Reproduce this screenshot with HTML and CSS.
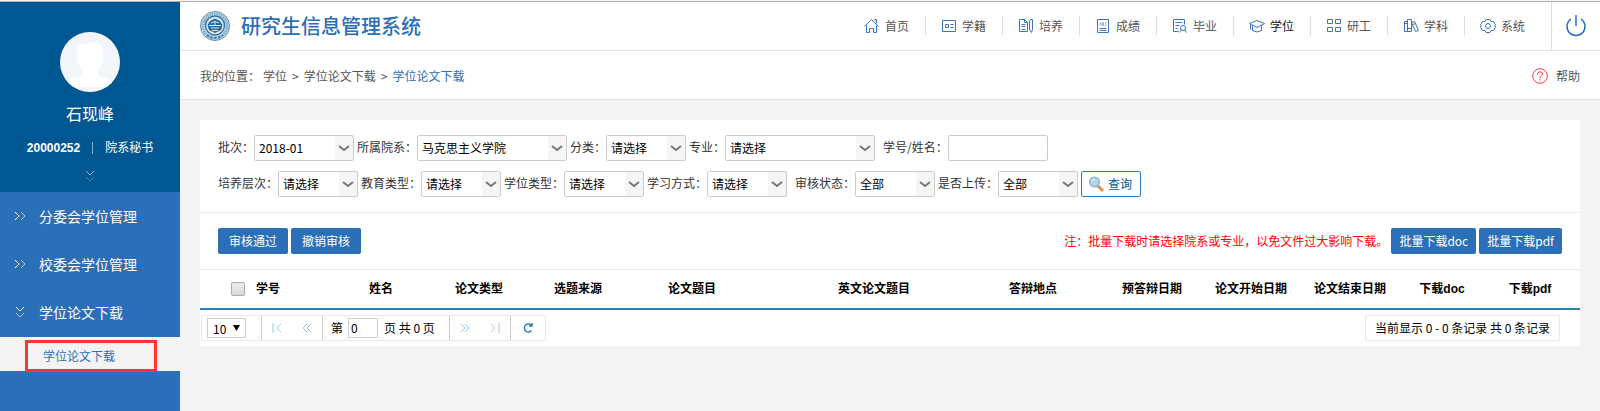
FILE: index.html
```html
<!DOCTYPE html>
<html lang="zh-CN">

<head>
<meta charset="utf-8">
<meta name="viewport" content="width=device-width, initial-scale=1">

<title>研究生信息管理系统</title>

<link rel="stylesheet" href="styles.css">
</head>

<body>

	<aside class="sidebar">
		<div class="profile">
			<svg class="avatar" viewBox="0 0 60 60">
				<defs><clipPath id="round"><circle cx="30" cy="30" r="30"/></clipPath></defs>
				<g clip-path="url(#round)">
					<rect width="60" height="60" fill="#f2f6fa"/>
					<path fill="#fff" d="M17 16c0-3 3-4 7-4 6-3 19-2 19 6v9c1 1 0 3-1 4-1 4-4 6-5 8 0 5 3 6 9 7 5 1 8 4 8 9H6c0-5 3-8 8-9 6-1 9-2 9-7-1-2-4-4-5-8-1-1-2-3-1-4z"/>
				</g>
			</svg>
			<div class="username">石现峰</div>
			<div class="role"><b>20000252</b><i></i><span>院系秘书</span></div>
			<svg class="more" width="12" height="12" viewBox="0 0 12 12"><path d="M2 1l4 4 4-4"/><path opacity=".5" d="M2 7l4 4 4-4"/></svg>
		</div>
		<nav class="menu">
			<a href="#"><svg width="12" height="12" viewBox="0 0 12 12"><path d="M1 2l4 4-4 4"/><path opacity=".6" d="M7 2l4 4-4 4"/></svg>分委会学位管理</a>
			<a href="#"><svg width="12" height="12" viewBox="0 0 12 12"><path d="M1 2l4 4-4 4"/><path opacity=".6" d="M7 2l4 4-4 4"/></svg>校委会学位管理</a>
			<a href="#"><svg width="12" height="12" viewBox="0 0 12 12"><path d="M2 1l4 4 4-4"/><path opacity=".6" d="M2 7l4 4 4-4"/></svg>学位论文下载</a>
			<div class="submenu"><a href="#">学位论文下载</a></div>
		</nav>
	</aside>

	<div class="main">
		<header class="header">
			<svg class="logo" viewBox="0 0 30 30">
				<circle cx="15" cy="15" r="14.5" fill="#c9dbe8" stroke="#5a8fb5"/>
				<circle cx="15" cy="15" r="12" fill="none" stroke="#7ba6c4" stroke-width="2.600" stroke-dasharray="1.400 1"/>
				<circle cx="15" cy="14.500" r="9.500" fill="#dfeaf2" stroke="#2f75a6" stroke-width="1.400"/>
				<path fill="#206a9e" d="M15 7.500l5 2.500 2.500 4-1.500 5-6 3-6-3-1.500-5 2.500-4z"/>
				<path fill="none" stroke="#dfeaf2" d="M9 14.500h12M11 12q4-3 8 0M11 17h8M12 19.500h6M15 10v4"/>
				<path fill="none" stroke="#3b78a5" stroke-width="2" stroke-dasharray="2 2" d="M7 24q8 6 16 0"/>
			</svg>
			<h1>研究生信息管理系统</h1>
			<nav class="topnav">
				<a href="#"><svg viewBox="-.5 -.5 16 16"><path d="M0 8l7-7 7 7M2 7v7h3v-4h4v4h3V7M10 1h2v4"/></svg>首页</a>
				<a href="#"><svg viewBox="-.5 -.5 16 16"><path d="M1 2h13v11H1zM4 6h3v3H4zM9 6h3M9 9h3"/></svg>学籍</a>
				<a href="#"><svg viewBox="-.5 -.5 16 16"><path d="M1 1h5l3 3v9H1zM6 1v3h3M3 6h4M3 8h4M3 11h4M11 3l1-2 2 0v10l-1 3-2-3z"/></svg>培养</a>
				<a href="#"><svg viewBox="-.5 -.5 16 16"><path d="M2 1h11v13H2zM4 10h7M4 12h7"/><path class="thin" d="M4 7l1-3 1 3M7 4v3h1V4zM11 4h-1v3h1"/></svg>成绩</a>
				<a href="#"><svg viewBox="-.5 -.5 16 16"><path d="M6 13H1V1h11v5M3 4h7M3 7h4M3 10h2M9 11l-2 3M12 11l2 3"/><circle cx="10.500" cy="9.500" r="2.500"/></svg>毕业</a>
				<a href="#" class="current"><svg viewBox="-.5 -.5 16 16"><path d="M0 5l7.500-3 7.500 3-7.500 4zM3 7v5q4.500 3 9 0V7M1 6v5"/></svg>学位</a>
				<a href="#"><svg viewBox="-.5 -.5 16 16"><path d="M1 1h5v4H1zM9 1h5v4H9zM1 9h5v4H1zM9 9h5v4H9z"/></svg>研工</a>
				<a href="#"><svg viewBox="-.5 -.5 16 16"><path d="M1 3h3v10H1zM4 1h4v12H4zM8 4l3-1 4 9-3 1zM1 5h3M4 10h4M9 6l3-1"/></svg>学科</a>
				<a href="#"><svg viewBox="-.5 -.5 16 16"><path d="M5.500 1h4l1 2 2.500 0 2 3.500-1 1 1 1-2 3.500-2.500 0-1 2h-4l-1-2-2.500 0-2-3.500 1-1-1-1L2 3l2.500 0z"/><circle cx="7.500" cy="7.500" r="2.500"/></svg>系统</a>
			</nav>
			<button class="power" type="button" aria-label="退出">
				<svg viewBox="0 0 22 22"><path d="M6 4a9 9 0 1 0 10 0M11 0v11"/></svg>
			</button>
		</header>

		<div class="crumbs">
			<span class="here">我的位置：</span>
			<a href="#">学位</a><span>&gt;</span>
			<a href="#">学位论文下载</a><span>&gt;</span>
			<a href="#" class="on">学位论文下载</a>
			<a href="#" class="help"><svg viewBox="0 0 16 16"><circle cx="8" cy="8" r="7.300"/><path d="M5.500 6.500q0-2.700 2.500-2.700t2.500 2.200q0 1.200-1.400 1.900Q8 8.500 8 10M8 11.200v1.300"/></svg>帮助</a>
		</div>

		<div class="card">
			<form class="filters">
				<div class="row">
					<label for="batch">批次：</label>
					<select id="batch" class="mid"><option>2018-01</option></select>
					<label for="dept">所属院系：</label>
					<select id="dept" class="wide"><option>马克思主义学院</option></select>
					<label for="kind">分类：</label>
					<select id="kind"><option>请选择</option></select>
					<label for="major">专业：</label>
					<select id="major" class="wide"><option>请选择</option></select>
					<label for="stu" class="apart">学号/姓名：</label>
					<input id="stu" type="text">
				</div>
				<div class="row">
					<label for="level">培养层次：</label>
					<select id="level"><option>请选择</option></select>
					<label for="edu">教育类型：</label>
					<select id="edu"><option>请选择</option></select>
					<label for="degree">学位类型：</label>
					<select id="degree"><option>请选择</option></select>
					<label for="mode">学习方式：</label>
					<select id="mode"><option>请选择</option></select>
					<label for="audit" class="apart">审核状态：</label>
					<select id="audit"><option>全部</option></select>
					<label for="upload">是否上传：</label>
					<select id="upload"><option>全部</option></select>
					<button class="search" type="button">
						<svg viewBox="0 0 16 16"><path d="M10 10l4 4" stroke="#e0913a" stroke-width="3" stroke-linecap="round"/><circle cx="6.500" cy="6" r="4.800" fill="#a8d6f8" stroke="#9aafc6" stroke-width="1.400"/><path d="M4 5q1-2 3-2" stroke="#fff" fill="none"/></svg>查询
					</button>
				</div>
			</form>

			<div class="toolbar">
				<button type="button">审核通过</button>
				<button type="button">撤销审核</button>
				<span class="note">注：批量下载时请选择院系或专业，以免文件过大影响下载。</span>
				<button class="download" type="button">批量下载doc</button>
				<button class="download" type="button">批量下载pdf</button>
			</div>

			<table class="grid">
				<colgroup>
					<col class="c-check"><col class="c-no"><col class="c-name"><col class="c-type"><col class="c-src"><col class="c-title"><col class="c-en"><col class="c-place"><col class="c-pre"><col class="c-start"><col class="c-end"><col class="c-doc"><col class="c-pdf">
				</colgroup>
				<thead>
					<tr>
						<th><input type="checkbox" aria-label="全选"></th>
						<th class="left">学号</th>
						<th>姓名</th>
						<th>论文类型</th>
						<th>选题来源</th>
						<th>论文题目</th>
						<th>英文论文题目</th>
						<th>答辩地点</th>
						<th>预答辩日期</th>
						<th>论文开始日期</th>
						<th>论文结束日期</th>
						<th>下载doc</th>
						<th>下载pdf</th>
					</tr>
				</thead>
			</table>

			<div class="pager">
				<div class="controls">
					<div class="group size"><select aria-label="每页条数"><option>10</option></select></div>
					<div class="group">
						<button type="button" aria-label="首页"><svg viewBox="0 0 12 12"><path d="M2 1v10M10 2L6 6l4 4"/></svg></button>
						<button type="button" aria-label="上一页"><svg viewBox="0 0 12 12"><path d="M6 2L2 6l4 4M10 2L6 6l4 4"/></svg></button>
					</div>
					<div class="group page">
						<label for="page">第</label><input id="page" type="text" value="0"><span>页 共 0 页</span>
					</div>
					<div class="group">
						<button type="button" aria-label="下一页"><svg viewBox="0 0 12 12"><path d="M2 2l4 4-4 4M6 2l4 4-4 4"/></svg></button>
						<button type="button" aria-label="末页"><svg viewBox="0 0 12 12"><path d="M2 2l4 4-4 4M10 1v10"/></svg></button>
					</div>
					<div class="group"><button class="reload" type="button" aria-label="刷新"><svg viewBox="0 0 12 12"><path d="M9.500 8.500a4 4 0 1 1 0-5M10 1v3H7"/></svg></button></div>
				</div>
				<div class="total">当前显示 0 - 0 条记录 共 0 条记录</div>
			</div>
		</div>
	</div>

</body>
</html>
```
FILE: styles.css
```css
* {
	box-sizing: border-box;
}

html {
	padding-top: 1px;
	background-color: #f3f3f3;
}

body {
	margin: 0;
	display: flex;
	min-height: calc(100vh - 1px);
	border-top: 1px solid #b0b0b0;
	color: #333;
	font: 12px/20px "Liberation Sans Narrow", "Noto Sans CJK SC", sans-serif;
}

a {
	color: inherit;
	text-decoration: none;
}

button, input, select {
	font: inherit;
	margin: 0;
}

svg {
	flex: none;
	fill: none;
}

/* left side */
.sidebar {
	flex: none;
	width: 180px;
	background-color: #2a6fb8;
	color: #fff;
}

.profile {
	display: flex;
	flex-direction: column;
	align-items: center;
	height: 190px;
	padding-top: 30px;
	background-color: #005792;
}

.avatar {
	width: 60px;
	height: 60px;
}

.username {
	margin-top: 9px;
	font-size: 16px;
	line-height: 24px;
}

.role {
	display: flex;
	align-items: center;
	gap: 12px;
	margin-top: 13px;
	font-family: "Liberation Sans", "Noto Sans CJK SC", sans-serif;
}

.role i {
	width: 1px;
	height: 12px;
	background-color: #7fabc8;
}

.more {
	margin-top: 12px;
	stroke: #8ab4d0;
}

.menu a {
	display: flex;
	align-items: center;
	gap: 13px;
	height: 48px;
	padding-left: 14px;
	font-size: 14px;
	stroke: #fff;
}

.menu .submenu {
	padding: 3px 23px 0 25px;
	height: 34px;
	margin-top: 1px;
	background-color: #f3f3f3;
}

.menu .submenu a {
	height: 32px;
	padding-left: 15px;
	border: 3px solid #f93535;
	color: #2a6fb8;
	font-size: 12px;
}

/* top */
.main {
	flex: 1;
	min-width: 0;
}

.header {
	display: flex;
	align-items: center;
	height: 49px;
	padding-left: 20px;
	border-bottom: 1px solid #e2e2e2;
	background-color: #fff;
}

.logo {
	width: 30px;
	height: 30px;
}

h1 {
	margin: 0 auto 0 11px;
	color: #2a6fb8;
	font-size: 20px;
	line-height: 28px;
	font-weight: 500;
}

.topnav {
	display: flex;
	padding-right: 10px;
}

.topnav a {
	display: flex;
	align-items: center;
	gap: 5px;
	width: 77px;
	height: 20px;
	padding-left: 15px;
	border-left: 1px solid #ddd;
	color: #555;
}

.topnav a:first-child {
	border-left-color: transparent;
}

.topnav .current {
	color: #111;
}

.topnav svg {
	width: 16px;
	height: 16px;
	overflow: visible;
	stroke: #3a75bd;
}

.topnav .thin {
	stroke-width: 0.5;
}

.power {
	align-self: stretch;
	width: 49px;
	padding: 0;
	border: 0;
	border-left: 1px solid #ddd;
	background: none;
}

.power svg {
	display: block;
	width: 22px;
	height: 22px;
	margin: 0 auto;
	stroke: #2a6fb8;
	stroke-width: 1.5;
}

.crumbs {
	display: flex;
	align-items: center;
	gap: 5px;
	height: 49px;
	padding: 2px 20px 0;
	border-bottom: 1px solid #e2e2e2;
	background-color: #fff;
	color: #555;
}

.crumbs .here {
	margin-right: -2px;
}

.crumbs .on {
	color: #2a6fb8;
}

.crumbs .help {
	display: flex;
	align-items: center;
	gap: 8px;
	margin-left: auto;
}

.help svg {
	width: 16px;
	height: 16px;
	stroke: #f43b3b;
}

/* search area */
.card {
	margin: 20px;
	background-color: #fff;
}

.filters {
	display: flex;
	flex-direction: column;
	gap: 10px;
	padding: 15px 18px;
	border-bottom: 1px solid #e4eef3;
}

.row {
	display: flex;
	align-items: center;
}

.row label {
	padding-bottom: 2px;
}

.row select, .row input {
	width: 80px;
	height: 26px;
	margin-right: 3px;
	padding: 0 4px;
	border: 1px solid #ccc;
	border-radius: 2px;
	background-color: #fff;
	color: #000;
}

.row select {
	appearance: none;
	background-image: url("data:image/svg+xml,%3Csvg xmlns='http://www.w3.org/2000/svg' width='18' height='24'%3E%3Crect width='18' height='24' fill='%23f5f5f5'/%3E%3Cpath d='M4 10l5 4 5-4' fill='none' stroke='%23777' stroke-width='2'/%3E%3C/svg%3E");
	background-repeat: no-repeat;
	background-position: right center;
}

.row .mid, .row input {
	width: 100px;
}

.row .wide {
	width: 150px;
}

.row .apart {
	margin-left: 5px;
}

.search {
	display: flex;
	align-items: center;
	gap: 4px;
	height: 26px;
	padding: 0 8px 0 6px;
	border: 1px solid #2a80b9;
	border-radius: 2px;
	background-color: #fff;
	color: #005792;
}

.search svg {
	width: 16px;
	height: 16px;
}

.toolbar {
	display: flex;
	align-items: center;
	gap: 3px;
	height: 57px;
	padding: 0 18px;
	border-bottom: 1px solid #e4eef3;
}

.toolbar button {
	height: 26px;
	padding: 0 11px;
	border: 0;
	border-radius: 2px;
	background-color: #2a6fb8;
	color: #fff;
}

.toolbar .download {
	padding: 0 8px;
}

.note {
	margin-left: auto;
	color: #f00;
}

/* results */
.grid {
	width: 100%;
	table-layout: fixed;
	border-collapse: collapse;
	border-bottom: 2px solid #2a80b9;
	color: #000;
	font-family: "Liberation Sans", "Noto Sans CJK SC", sans-serif;
}

.grid th {
	height: 39px;
	padding: 0;
	white-space: nowrap;
}

.grid th:first-child {
	text-align: right;
}

.grid .left {
	padding-left: 11px;
	text-align: left;
}

.grid input {
	display: block;
	width: 14px;
	height: 14px;
	margin: 0 0 0 auto;
	appearance: none;
	border: 1px solid #aaa;
	border-radius: 2px;
	background-image: linear-gradient(#eee, #d8d8d8);
}

.c-check { width: 45px; }
.c-no { width: 111px; }
.c-name { width: 50px; }
.c-type { width: 146px; }
.c-src { width: 52px; }
.c-title { width: 176px; }
.c-en { width: 188px; }
.c-place { width: 130px; }
.c-pre { width: 108px; }
.c-start { width: 90px; }
.c-end { width: 108px; }
.c-doc { width: 76px; }
.c-pdf { width: 100px; }

.pager {
	display: flex;
	align-items: center;
	justify-content: space-between;
	padding: 5px 20px 5px 1px;
	color: #000;
}

.controls, .total {
	display: flex;
	height: 26px;
	border: 1px solid #e8e8e8;
	border-radius: 2px;
}

.total {
	align-items: center;
	padding: 0 9px;
}

.group {
	display: flex;
	align-items: center;
}

.group + .group {
	border-left: 1px solid #ccc;
}

.size {
	padding: 0 15px 0 5px;
}

.size select {
	width: 39px;
	height: 20px;
	padding: 0 5px;
	appearance: none;
	border: 1px solid #ccc;
	background: #fff url("data:image/svg+xml,%3Csvg xmlns='http://www.w3.org/2000/svg' width='12' height='8'%3E%3Cpath d='M0 1h7L3.5 7z'/%3E%3C/svg%3E") no-repeat right center;
}

.group button {
	width: 30px;
	height: 24px;
	padding: 0;
	border: 0;
	background: none;
}

.group svg {
	display: block;
	width: 12px;
	height: 12px;
	margin: 0 auto;
	stroke: #9cc7e4;
}

.group .reload {
	width: 34px;
}

.group .reload svg {
	stroke: #2a80b9;
	stroke-width: 1.5;
}

.page {
	padding: 0 14px 0 8px;
}

.page input {
	width: 30px;
	height: 20px;
	margin: 0 6px 0 5px;
	padding: 0 2px;
	border: 1px solid #ccc;
}
```
